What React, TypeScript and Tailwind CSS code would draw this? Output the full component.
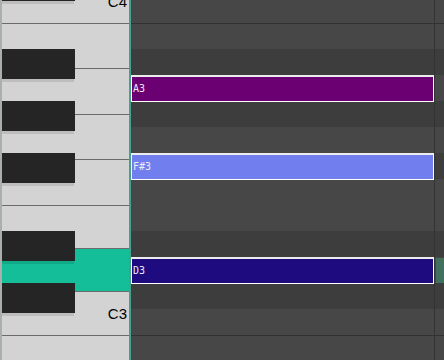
import React from 'react';

type WhiteKey = { name: string; h: number; label?: string; active?: boolean };

const whiteKeys: WhiteKey[] = [
    { name: 'C4', h: 44, label: 'C4' },
    { name: 'B3', h: 45 },
    { name: 'A3', h: 46 },
    { name: 'G3', h: 45 },
    { name: 'F3', h: 46 },
    { name: 'E3', h: 43 },
    { name: 'D3', h: 43, active: true },
    { name: 'C3', h: 44, label: 'C3' },
    { name: 'B2', h: 45 },
];

// top of each black key, in px from the top of the view
const blackKeys = [-29, 49, 101, 153, 231, 283];

// pitch rows of the grid, top to bottom
const rows = ['C4', 'B3', 'A#3', 'A3', 'G#3', 'G3', 'F#3', 'F3', 'E3', 'D#3', 'D3', 'C#3', 'C3', 'B2'];

const notes = [
    { label: 'A3', top: 75, color: 'bg-[#6a0072]' },
    { label: 'F#3', top: 153, color: 'bg-[#717eee]' },
    { label: 'D3', top: 257, color: 'bg-[#1f0b80]' },
];

export default function App() {
    return (
        <div className="w-[444px] h-[360px] overflow-hidden flex bg-[#444444]">
            {/* Keyboard */}
            <div className="w-[2px] shrink-0 bg-[#a9afad]" />
            <div className="relative w-[127px] shrink-0 overflow-hidden bg-[#d3d3d3]">
                <div className="flex flex-col mt-[-21px]">
                    {whiteKeys.map((k, i) => (
                        <div
                            key={k.name}
                            style={{ height: k.h }}
                            className={`flex items-center justify-end pr-[2px] border-t border-[#6b6b6b] ${k.active ? 'bg-[#14be98]' : ''} ${i === 0 ? 'border-transparent' : ''}`}
                        >
                            {k.label && (
                                <span className="text-[15px] leading-none text-black font-['Liberation_Sans',sans-serif]">
                                    {k.label}
                                </span>
                            )}
                        </div>
                    ))}
                </div>
                {blackKeys.map((top) => (
                    <div key={top} className="absolute left-0 w-[73px]" style={{ top }}>
                        <div className="h-[30px] bg-[#252525]" />
                        <div className="h-[3px] w-[72px] bg-black/10" />
                    </div>
                ))}
            </div>
            <div className="w-[2px] shrink-0 bg-[#45a08d]" />

            {/* Note grid */}
            <div className="relative flex-1 overflow-hidden">
                <div className="flex flex-col mt-[-3px]">
                    {rows.map((r) => (
                        <div
                            key={r}
                            className={`h-[26px] ${r.includes('#') ? 'bg-[#3d3d3d]' : 'bg-[#474747]'} ${r.startsWith('B') ? 'border-t border-[#323232]' : ''}`}
                        />
                    ))}
                </div>
                <div className="absolute top-0 bottom-0 left-[303px] w-[1px] bg-[#333333]" />
                <div className="absolute left-[305px] top-[258px] w-[10px] h-[25px] bg-[#41705f]" />
                {notes.map((n) => (
                    <div
                        key={n.label}
                        style={{ top: n.top }}
                        className={`absolute left-0 w-[303px] h-[27px] border border-white border-t-2 border-t-[#ececec] flex items-center pl-[1px] ${n.color}`}
                    >
                        <span className="text-[10px] leading-none text-[#efe8f7] font-['DejaVu_Sans_Mono',monospace]">
                            {n.label}
                        </span>
                    </div>
                ))}
            </div>
        </div>
    );
}
